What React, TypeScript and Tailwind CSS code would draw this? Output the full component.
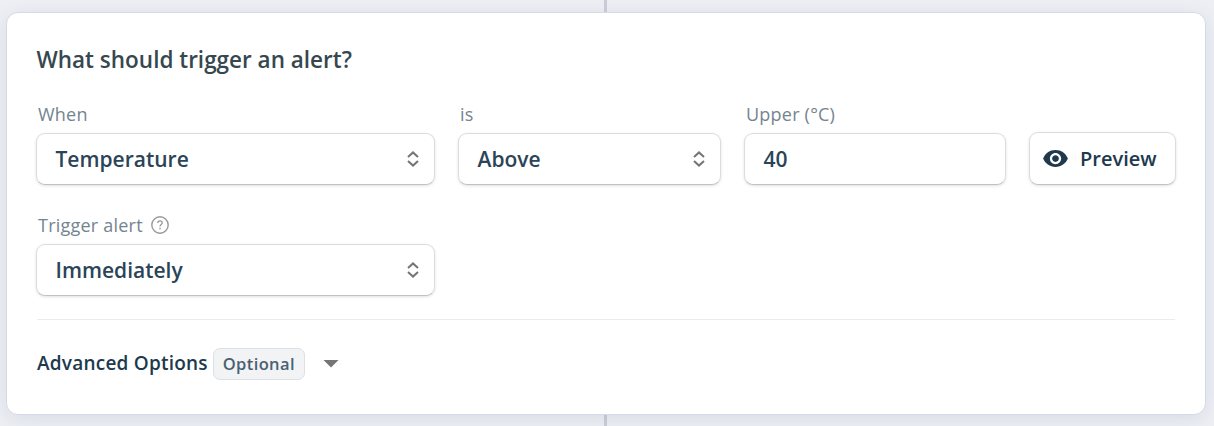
import React from 'react';
import { MdVisibility } from 'react-icons/md';

interface FieldProps {
  label: string;
  value: string;
  className: string;
  isSelect?: boolean;
  hasHelp?: boolean;
}

const UnfoldIcon = () => (
  <svg className="h-4 w-3" viewBox="0 0 12 16" fill="none" stroke="#757575" strokeWidth="2">
    <path d="M1 6 6 1.4 11 6" />
    <path d="M1 10 6 14.6 11 10" />
  </svg>
);

const HelpIcon = () => (
  <svg className="h-[18px] w-[18px]" viewBox="0 0 18 18" fill="none" stroke="#999999">
    <circle cx="9" cy="9" r="8.2" strokeWidth="1.4" />
    <path d="M6.8 7.1C6.8 5.7 7.8 4.9 9 4.9s2.2.9 2.2 2.1c0 1.5-2.2 1.7-2.2 3.4" strokeWidth="1.3" />
    <path d="M9 11.7v1.5" strokeWidth="1.4" />
  </svg>
);

const Field: React.FC<FieldProps> = ({ label, value, className, isSelect, hasHelp }) => {
  return (
    <div className={className}>
      <div className="flex h-[26px] items-center gap-2 pl-0.5 text-[18px] tracking-[0.22px] text-[#74848f]">
        <span>{label}</span>
        {hasHelp && <HelpIcon />}
      </div>
      <div className="mt-[6px] flex h-[52px] items-center justify-between rounded-[9px] border border-[#dcdce0] border-b-[#c0c0c8] bg-white pr-[15.5px] pl-[18.5px] text-[21px] font-semibold text-[#2b4458] shadow-[0_1px_3px_rgba(0,0,0,0.12)]">
        <span className="pt-px">{value}</span>
        {isSelect && (
          <span className="pb-px">
            <UnfoldIcon />
          </span>
        )}
      </div>
    </div>
  );
};

export default function App() {
  return (
    <div className="flex h-[426px] w-[1214px] flex-col overflow-hidden bg-[#eeeff4] font-['Open_Sans',sans-serif]">
      <div className="ml-[604px] h-3 w-[3px] shrink-0 bg-[#cbccd6]" />

      <div className="relative ml-1.5 h-[403px] w-[1200px] shrink-0 rounded-xl border border-[#d6dae8] bg-white px-[29px] pt-[31px] shadow-[0_4px_18px_rgba(120,140,180,0.18)]">
        <h2 className="ml-[0.5px] h-8 text-[22.5px] leading-8 font-semibold text-[#37474f]">
          What should trigger an alert?
        </h2>

        <div className="mt-[25px] flex items-end gap-[23px]">
          <Field label="When" value="Temperature" className="w-[399px] shrink-0" isSelect />
          <Field label="is" value="Above" className="w-[263px] shrink-0" isSelect />
          <Field label="Upper (°C)" value="40" className="w-[262px] shrink-0" />
          <button className="flex h-[53px] w-[147px] shrink-0 items-center rounded-[9px] border border-[#dcdce0] border-b-[#c0c0c8] bg-white pl-[12px] text-[20px] font-semibold text-[#20394d] shadow-[0_1px_3px_rgba(0,0,0,0.12)]">
            <MdVisibility className="mr-[11px] h-[27px] w-[27px]" />
            Preview
          </button>
        </div>

        <div className="mt-[27px] flex">
          <Field label="Trigger alert" value="Immediately" className="w-[399px]" isSelect hasHelp />
        </div>

        <div className="mt-[23px] mr-px ml-px border-t border-[#ececee]" />

        <div className="mt-[28px] ml-px flex h-8 items-center text-[19px] font-semibold tracking-[0.22px] text-[#20394d]">
          <span className="pb-px">Advanced Options</span>
          <span className="ml-[5px] flex h-8 w-[92px] items-center justify-center rounded-[7px] border border-[#dde1e4] bg-[#f1f3f5] text-[16.5px] tracking-[0.4px] text-[#4a6072]">
            Optional
          </span>
          <svg className="ml-[18px] h-[8px] w-4" viewBox="0 0 16 8" fill="#757575">
            <path d="M0.5 0h15L8 7.5z" />
          </svg>
        </div>
      </div>

      <div className="ml-[604px] h-[11px] w-[3px] shrink-0 bg-[#cbccd6]" />
    </div>
  );
}
